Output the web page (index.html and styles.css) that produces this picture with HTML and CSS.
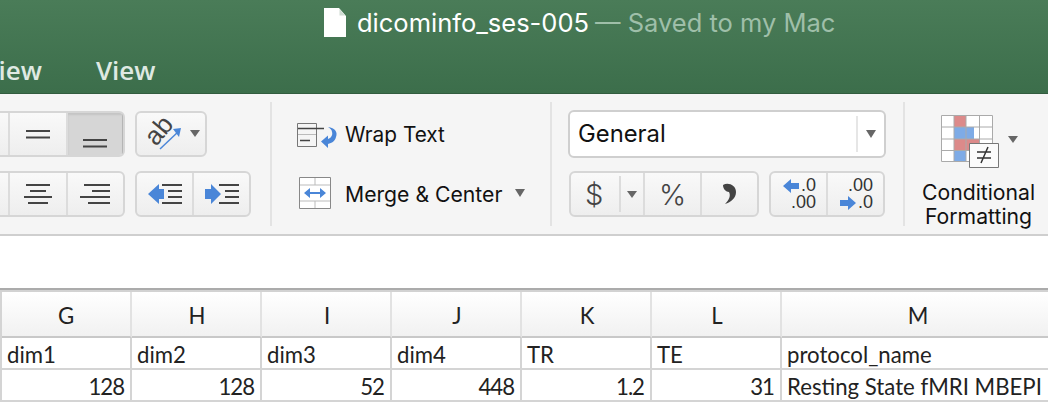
FILE: index.html
```html
<!DOCTYPE html>
<html lang="en">
<head>
    <meta charset="UTF-8">
    <meta name="viewport" content="width=device-width, initial-scale=1.0">
    <title>dicominfo_ses-005</title>
    <link rel="stylesheet" href="styles.css">
</head>
<body>
    <header class="titlebar">
        <div class="doc-title">
            <svg class="doc-icon" width="23" height="30" viewBox="0 0 23 30"><path d="M0 0H15L22 8V29H0Z" fill="#fff"/><path d="M15.500 1L21 7.500H15.500Z" fill="#cfdcd3"/></svg>
            <span class="doc-name">dicominfo_ses-005</span>
            <span class="doc-status">— Saved to my Mac</span>
        </div>
        <nav class="tabs">
            <span class="tab tab-cut">Review</span>
            <span class="tab">View</span>
        </nav>
    </header>

    <section class="ribbon">
        <div class="group group-align">
            <div class="btn-row">
                <div class="seg-group seg-cut">
                    <div class="seg"></div>
                    <div class="seg"><svg width="24" height="9" viewBox="0 0 24 9"><path d="M0 1H24M0 7.500H24" stroke="#444" stroke-width="2"/></svg></div>
                    <div class="seg seg-on"><svg width="24" height="9" viewBox="0 0 24 9"><path d="M0 1H24M0 7.500H24" stroke="#444" stroke-width="2"/></svg></div>
                </div>
                <div class="seg-group seg-orient">
                    <div class="seg">
                        <svg width="66" height="44" viewBox="0 0 66 44">
                            <text class="ab-text" transform="translate(18 35) rotate(-50)">ab</text>
                            <path d="M22 37L41 19" stroke="#4a86d8" stroke-width="1.500"/>
                            <path d="M35 17L43 16L41 25Z" fill="#4a86d8"/>
                            <path d="M52 18H62L57 25Z" fill="#666"/>
                        </svg>
                    </div>
                </div>
            </div>
            <div class="btn-row">
                <div class="seg-group seg-cut">
                    <div class="seg"></div>
                    <div class="seg"><svg width="28" height="20" viewBox="0 0 28 20"><path d="M2 1H26M6 7H22M0 13H28M4 19H24" stroke="#444" stroke-width="2"/></svg></div>
                    <div class="seg"><svg width="30" height="20" viewBox="0 0 30 20"><path d="M4 1H30M12 7H30M0 13H30M8 19H30" stroke="#444" stroke-width="2"/></svg></div>
                </div>
                <div class="seg-group seg-indent">
                    <div class="seg"><svg width="34" height="20" viewBox="0 0 34 20"><path d="M0 10L11 0V5H16V15H11V20Z" fill="#4a86d8"/><path d="M14 1H34M20 7H34M20 13H34M14 19H34" stroke="#444" stroke-width="2"/></svg></div>
                    <div class="seg"><svg width="34" height="20" viewBox="0 0 34 20"><path d="M16 10L6 0V5H0V15H6V20Z" fill="#4a86d8"/><path d="M14 1H34M20 7H34M20 13H34M14 19H34" stroke="#444" stroke-width="2"/></svg></div>
                </div>
            </div>
        </div>

        <div class="divider"></div>

        <div class="group group-wrap">
            <div class="cmd">
                <svg class="cmd-icon" width="42" height="26" viewBox="0 0 42 26">
                    <path d="M.5 1.500H19.500V24.500H.5Z" fill="none" stroke="#777"/>
                    <path d="M1 6.500H27M3 18.500H13" stroke="#444" stroke-width="1.500"/>
                    <path d="M1 12.500H19" stroke="#bbb"/>
                    <path d="M31 5C38 6 41 10 39 15C38 19 35 21 31 22V26L24 19.500L31 13.500V17C34 16 36 13 35 10C35 8 33 6 31 5Z" fill="#4a86d8"/>
                </svg>
                <span class="label-wrap">Wrap Text</span>
            </div>
            <div class="cmd">
                <svg class="cmd-icon cmd-icon-merge" width="32" height="32" viewBox="0 0 32 32">
                    <path d="M.5 .5H31.500V31.500H.5Z" fill="#fff" stroke="#888"/>
                    <path d="M1 8H31M1 24H31M16 1V8M16 24V31" stroke="#bbb"/>
                    <path d="M6 16H26" stroke="#4a86d8" stroke-width="2"/>
                    <path d="M11 11L5 16L11 21ZM21 11L27 16L21 21Z" fill="#4a86d8"/>
                </svg>
                <span class="label-merge">Merge &amp; Center</span>
                <i class="caret caret-merge"></i>
            </div>
        </div>

        <div class="divider divider-number"></div>

        <div class="group group-number">
            <div class="format-box">
                <span class="format-name">General</span>
                <div class="format-arrow"><i class="caret"></i></div>
            </div>
            <div class="btn-row btn-row-number">
                <div class="seg-group seg-money">
                    <div class="seg seg-dollar"><span class="sym">$</span><b class="inner-line"></b><i class="caret caret-small"></i></div>
                    <div class="seg"><span class="sym">%</span></div>
                    <div class="seg">
                        <svg width="15" height="22" viewBox="0 0 15 22"><path d="M1 2C6 -1 14 2 14 9C14 15 9 19 3 21C7 17 9 13 7 9C4 9 1 6 1 2Z" fill="#444"/></svg>
                    </div>
                </div>
                <div class="seg-group seg-dec">
                    <div class="seg">
                        <svg class="dec-icon" width="34" height="34" viewBox="0 0 34 34">
                            <path d="M1 9L9 2V6H17V12H9V16Z" fill="#4a86d8"/>
                            <text class="dec-text" x="19" y="14">.0</text>
                            <text class="dec-text" x="9" y="31">.00</text>
                        </svg>
                    </div>
                    <div class="seg">
                        <svg class="dec-icon" width="34" height="34" viewBox="0 0 34 34">
                            <text class="dec-text" x="9" y="14">.00</text>
                            <path d="M17 26L9 19V23H1V29H9V33Z" fill="#4a86d8"/>
                            <text class="dec-text" x="19" y="31">.0</text>
                        </svg>
                    </div>
                </div>
            </div>
        </div>

        <div class="divider divider-cond"></div>

        <div class="group group-cond">
            <div class="cond-icon">
                <svg width="84" height="54" viewBox="0 0 84 54">
                    <path d="M0 0H52V47H0Z" fill="#fff"/>
                    <path d="M13 0H25V12H13ZM13 24H39V36H13Z" fill="#dc8a8a"/>
                    <path d="M13 12H33V24H13ZM13 36H25V47H13Z" fill="#7eabe6"/>
                    <path d="M.5 .5H51.500V46.500H.5ZM13 0V47M25 0V47M38.500 0V47M0 12H52M0 24H52M0 35.500H52" fill="none" stroke="#aaa"/>
                    <path d="M28.500 28.500H57.500V52.500H28.500Z" fill="#fbfbfb" stroke="#777"/>
                    <path d="M36 37H50M36 43H50M40 48L47 32" fill="none" stroke="#333" stroke-width="1.500"/>
                    <path d="M67 21H77L72 28Z" fill="#666"/>
                </svg>
            </div>
            <div class="cond-label">Conditional<br>Formatting</div>
        </div>
    </section>

    <div class="formula-bar"></div>

    <section class="sheet">
        <div class="col-head">G</div>
        <div class="col-head">H</div>
        <div class="col-head">I</div>
        <div class="col-head">J</div>
        <div class="col-head">K</div>
        <div class="col-head">L</div>
        <div class="col-head">M</div>

        <div class="cell">dim1</div>
        <div class="cell">dim2</div>
        <div class="cell">dim3</div>
        <div class="cell">dim4</div>
        <div class="cell">TR</div>
        <div class="cell">TE</div>
        <div class="cell">protocol_name</div>

        <div class="cell num">128</div>
        <div class="cell num">128</div>
        <div class="cell num">52</div>
        <div class="cell num">448</div>
        <div class="cell num">1.2</div>
        <div class="cell num">31</div>
        <div class="cell">Resting State fMRI MBEPI</div>
    </section>
</body>
</html>
```

FILE: styles.css
```css
* {
    box-sizing: border-box;
}
html, body {
    margin: 0;
    height: 402px;
    overflow: hidden;
}
body {
    display: flex;
    flex-direction: column;
    width: 1048px;
    background-color: #ffffff;
    font-family: Inter, "Liberation Sans", sans-serif;
    color: #111111;
}
svg {
    display: block;
    overflow: visible;
}

/* title bar */
.titlebar {
    height: 94px;
    flex: none;
    background: linear-gradient(#4a7c58, #3c6e4b);
    border-bottom: 1px solid #325c3f;
    overflow: hidden;
}
.doc-title {
    display: flex;
    align-items: center;
    height: 46px;
    padding-left: 324px;
    padding-bottom: 1px;
    font-size: 25.5px;
    white-space: nowrap;
}
.doc-icon {
    margin-right: 10px;
}
.doc-name {
    color: #ffffff;
    margin-right: 6px;
}
.doc-status {
    color: #9fbfa9;
}
.tabs {
    display: flex;
    gap: 54px;
    margin-left: -47px;
    padding-top: 6px;
    font-family: "Open Sans", sans-serif;
    font-size: 26px;
    font-weight: 600;
    color: #dfe9e2;
}

/* ribbon */
.ribbon {
    display: flex;
    flex: none;
    height: 142px;
    padding-top: 8px;
    background-color: #f5f5f5;
    border-bottom: 2px solid #cfcfcf;
}
.group-align {
    display: flex;
    flex-direction: column;
    gap: 14px;
    width: 300px;
    flex: none;
    margin-left: -49px;
    padding-top: 9px;
}
.btn-row {
    display: flex;
    gap: 10px;
}
.seg-group {
    display: flex;
    height: 46px;
    background: linear-gradient(#f9f9f9, #eeeeee);
    border: 2px solid #d6d6d6;
    border-radius: 6px;
    overflow: hidden;
}
.seg-cut {
    width: 174px;
}
.seg-orient {
    width: 72px;
}
.seg-indent {
    width: 116px;
}
.seg-money {
    width: 190px;
}
.seg-dec {
    width: 116px;
}
.seg {
    display: flex;
    flex: 1;
    align-items: center;
    justify-content: center;
    border-left: 2px solid #dcdcdc;
}
.seg:first-child {
    border-left: none;
}
.seg-on {
    background-color: #d6d6d6;
    align-items: flex-end;
    padding-bottom: 7px;
    box-shadow: inset 0 2px 2px #c4c4c4, inset -1px 0 #b0b0b0;
}
.ab-text {
    font-family: "Liberation Sans", sans-serif;
    font-size: 26px;
    fill: #444444;
}
.divider {
    flex: none;
    width: 2px;
    height: 124px;
    margin-left: 19px;
    background-color: #e3e3e3;
}

/* wrap and merge */
.group-wrap {
    display: flex;
    flex-direction: column;
    flex: none;
    gap: 24px;
    width: 278px;
    padding: 16px 0 0 25px;
    font-size: 21.2px;
}
.cmd {
    display: flex;
    align-items: center;
    height: 34px;
    white-space: nowrap;
}
.cmd-icon {
    margin-right: 6px;
}
.cmd-icon-merge {
    margin-left: 2px;
    margin-right: 14px;
}
.label-wrap {
    font-size: 20.8px;
    padding-bottom: 2px;
}
.label-merge {
    padding-top: 2px;
}
.caret {
    display: block;
    width: 0;
    height: 0;
    border-left: 5px solid transparent;
    border-right: 5px solid transparent;
    border-top: 8px solid #666666;
}
.caret-merge {
    margin-left: 13px;
}
.caret-small {
    border-top-width: 7px;
}
.divider-number {
    margin-left: 0;
}

/* number format */
.group-number {
    display: flex;
    flex-direction: column;
    flex: none;
    gap: 13px;
    width: 318px;
    margin-left: 16px;
    padding-top: 8px;
}
.format-box {
    display: flex;
    align-items: center;
    justify-content: space-between;
    height: 48px;
    padding-left: 8px;
    background-color: #ffffff;
    border: 2px solid #cfcfcf;
    border-radius: 6px;
    font-size: 23.8px;
}
.format-name {
    padding-bottom: 2px;
}
.format-arrow {
    display: flex;
    align-items: center;
    justify-content: center;
    width: 28px;
    height: 36px;
    border-left: 2px solid #e6e6e6;
}
.btn-row-number {
    justify-content: space-between;
    padding: 0 1px;
}
.seg-dollar {
    flex: none;
    width: 72px;
    justify-content: flex-start;
    padding-left: 14px;
}
.sym {
    font-size: 29px;
    font-weight: 300;
    color: #444444;
}
.inner-line {
    width: 2px;
    height: 36px;
    margin: 0 6px 0 16px;
    background-color: #dcdcdc;
}
.dec-icon {
    flex: none;
}
.dec-text {
    font-size: 18px;
    font-family: "Liberation Sans", sans-serif;
    fill: #333333;
}
.divider-cond {
    margin-left: 17px;
}

/* conditional formatting */
.group-cond {
    display: flex;
    flex-direction: column;
    flex: none;
    width: 113px;
    margin-left: 17px;
    padding-top: 13px;
}
.cond-icon {
    margin-left: 19px;
}
.cond-label {
    margin-top: 11px;
    font-size: 21.2px;
    line-height: 24px;
    text-align: center;
    white-space: nowrap;
}

/* formula bar */
.formula-bar {
    flex: none;
    height: 56px;
    background-color: #ffffff;
    border-bottom: 2px solid #d2d2d2;
    box-shadow: inset 0 -2px #ababab;
}

/* sheet */
.sheet {
    display: grid;
    grid-template-columns: repeat(6, 130px) 272px;
    grid-template-rows: 46px 32px 32px;
    font-family: Lato, sans-serif;
    font-size: 22.2px;
    color: #222222;
    border-left: 2px solid #d4d4d4;
    white-space: nowrap;
}
.col-head {
    display: flex;
    align-items: center;
    justify-content: center;
    padding: 2px 0 0 2px;
    background: linear-gradient(#ffffff, #f1f1f1);
    border-right: 2px solid #e2e2e2;
    border-bottom: 2px solid #c8c8c8;
}
.col-head:first-child {
    padding-left: 0;
}
.cell {
    padding: 3px 5px 0 5px;
    line-height: 27px;
    border-right: 2px solid #d4d4d4;
    border-bottom: 2px solid #d4d4d4;
    overflow: hidden;
}
.num {
    padding-right: 6px;
    letter-spacing: -1px;
    text-align: right;
}
```
